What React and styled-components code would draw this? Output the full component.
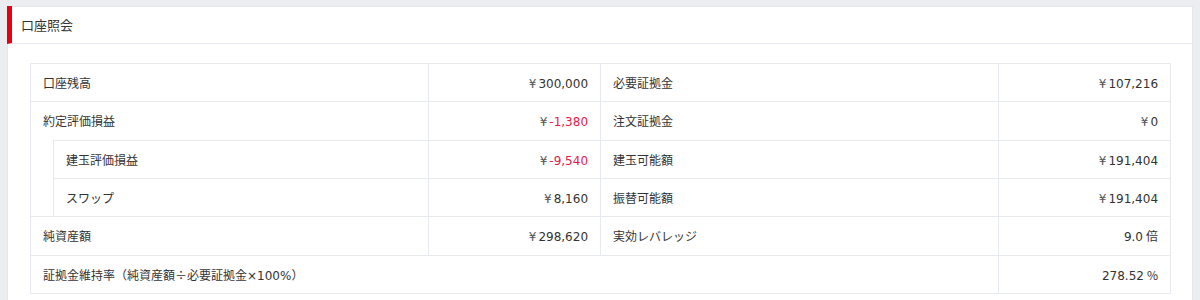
import React from 'react'
import styled, { createGlobalStyle } from 'styled-components'

const GlobalStyle = createGlobalStyle`
  html, body {
    margin: 0;
    padding: 0;
    background: #ebedf0;
  }
  body {
    font-family: "Noto Sans CJK JP", "Noto Sans", sans-serif;
    color: #333;
  }
`

const Page = styled.div`
  padding: 6px 7px;
`

const Panel = styled.section`
  background: #fff;
  border: 1px solid #e3e6ea;
`

const PanelHeader = styled.h2`
  margin: -1px 0 0 -1px;
  height: 37px;
  display: flex;
  align-items: center;
  padding-left: 9px;
  border-left: 5px solid #e60012;
  border-bottom: 1px solid #e6eaf0;
  font-size: 13px;
  font-weight: normal;
  color: #333;
`

const PanelBody = styled.div`
  padding: 19px 22px 20px;
`

const Table = styled.table`
  width: 100%;
  table-layout: fixed;
  border-collapse: separate;
  border-spacing: 0;
  border-right: 1px solid #e6eaef;
  border-bottom: 1px solid #e6eaef;
  font-size: 12px;
`

const Cell = styled.td`
  height: 17.33px;
  padding: 10px 12px;
  line-height: 17.33px;
  border-top: 1px solid #e6eaef;
  border-left: 1px solid #e6eaef;
  text-align: ${({ $right }) => ($right ? 'right' : 'left')};
  color: #333;
  white-space: nowrap;
`

const IndentCell = styled.td`
  border-left: 1px solid #e6eaef;
  padding: 0;
`

const Num = styled.span`
  font-family: "DejaVu Sans", "Noto Sans CJK JP", sans-serif;
  font-size: 12px;
  line-height: 1;
  color: ${({ $negative }) => ($negative ? '#e8194a' : '#333')};
`

const Yen = styled(Num)`
  color: #555;
  margin-right: 2px;
`

const Unit = styled.span`
  margin-left: 3px;
`

const Money = ({ value }) => (
  <>
    <Yen>¥</Yen>
    <Num $negative={value.startsWith('-')}>{value}</Num>
  </>
)

const App = () => (
  <>
    <GlobalStyle />
    <Page>
      <Panel>
        <PanelHeader>口座照会</PanelHeader>
        <PanelBody>
          <Table>
            <colgroup>
              <col style={{ width: 23 }} />
              <col style={{ width: 375 }} />
              <col style={{ width: 172 }} />
              <col style={{ width: 398 }} />
              <col style={{ width: 172 }} />
            </colgroup>
            <tbody>
              <tr>
                <Cell colSpan={2}>口座残高</Cell>
                <Cell $right><Money value="300,000" /></Cell>
                <Cell>必要証拠金</Cell>
                <Cell $right><Money value="107,216" /></Cell>
              </tr>
              <tr>
                <Cell colSpan={2}>約定評価損益</Cell>
                <Cell $right><Money value="-1,380" /></Cell>
                <Cell>注文証拠金</Cell>
                <Cell $right><Money value="0" /></Cell>
              </tr>
              <tr>
                <IndentCell rowSpan={2} />
                <Cell>建玉評価損益</Cell>
                <Cell $right><Money value="-9,540" /></Cell>
                <Cell>建玉可能額</Cell>
                <Cell $right><Money value="191,404" /></Cell>
              </tr>
              <tr>
                <Cell>スワップ</Cell>
                <Cell $right><Money value="8,160" /></Cell>
                <Cell>振替可能額</Cell>
                <Cell $right><Money value="191,404" /></Cell>
              </tr>
              <tr>
                <Cell colSpan={2}>純資産額</Cell>
                <Cell $right><Money value="298,620" /></Cell>
                <Cell>実効レバレッジ</Cell>
                <Cell $right><Num>9.0</Num><Unit>倍</Unit></Cell>
              </tr>
              <tr>
                <Cell colSpan={4}>
                  証拠金維持率（純資産額÷必要証拠金<Num>×100%</Num>）
                </Cell>
                <Cell $right><Num>278.52</Num><Unit>%</Unit></Cell>
              </tr>
            </tbody>
          </Table>
        </PanelBody>
      </Panel>
    </Page>
  </>
)

export default App
